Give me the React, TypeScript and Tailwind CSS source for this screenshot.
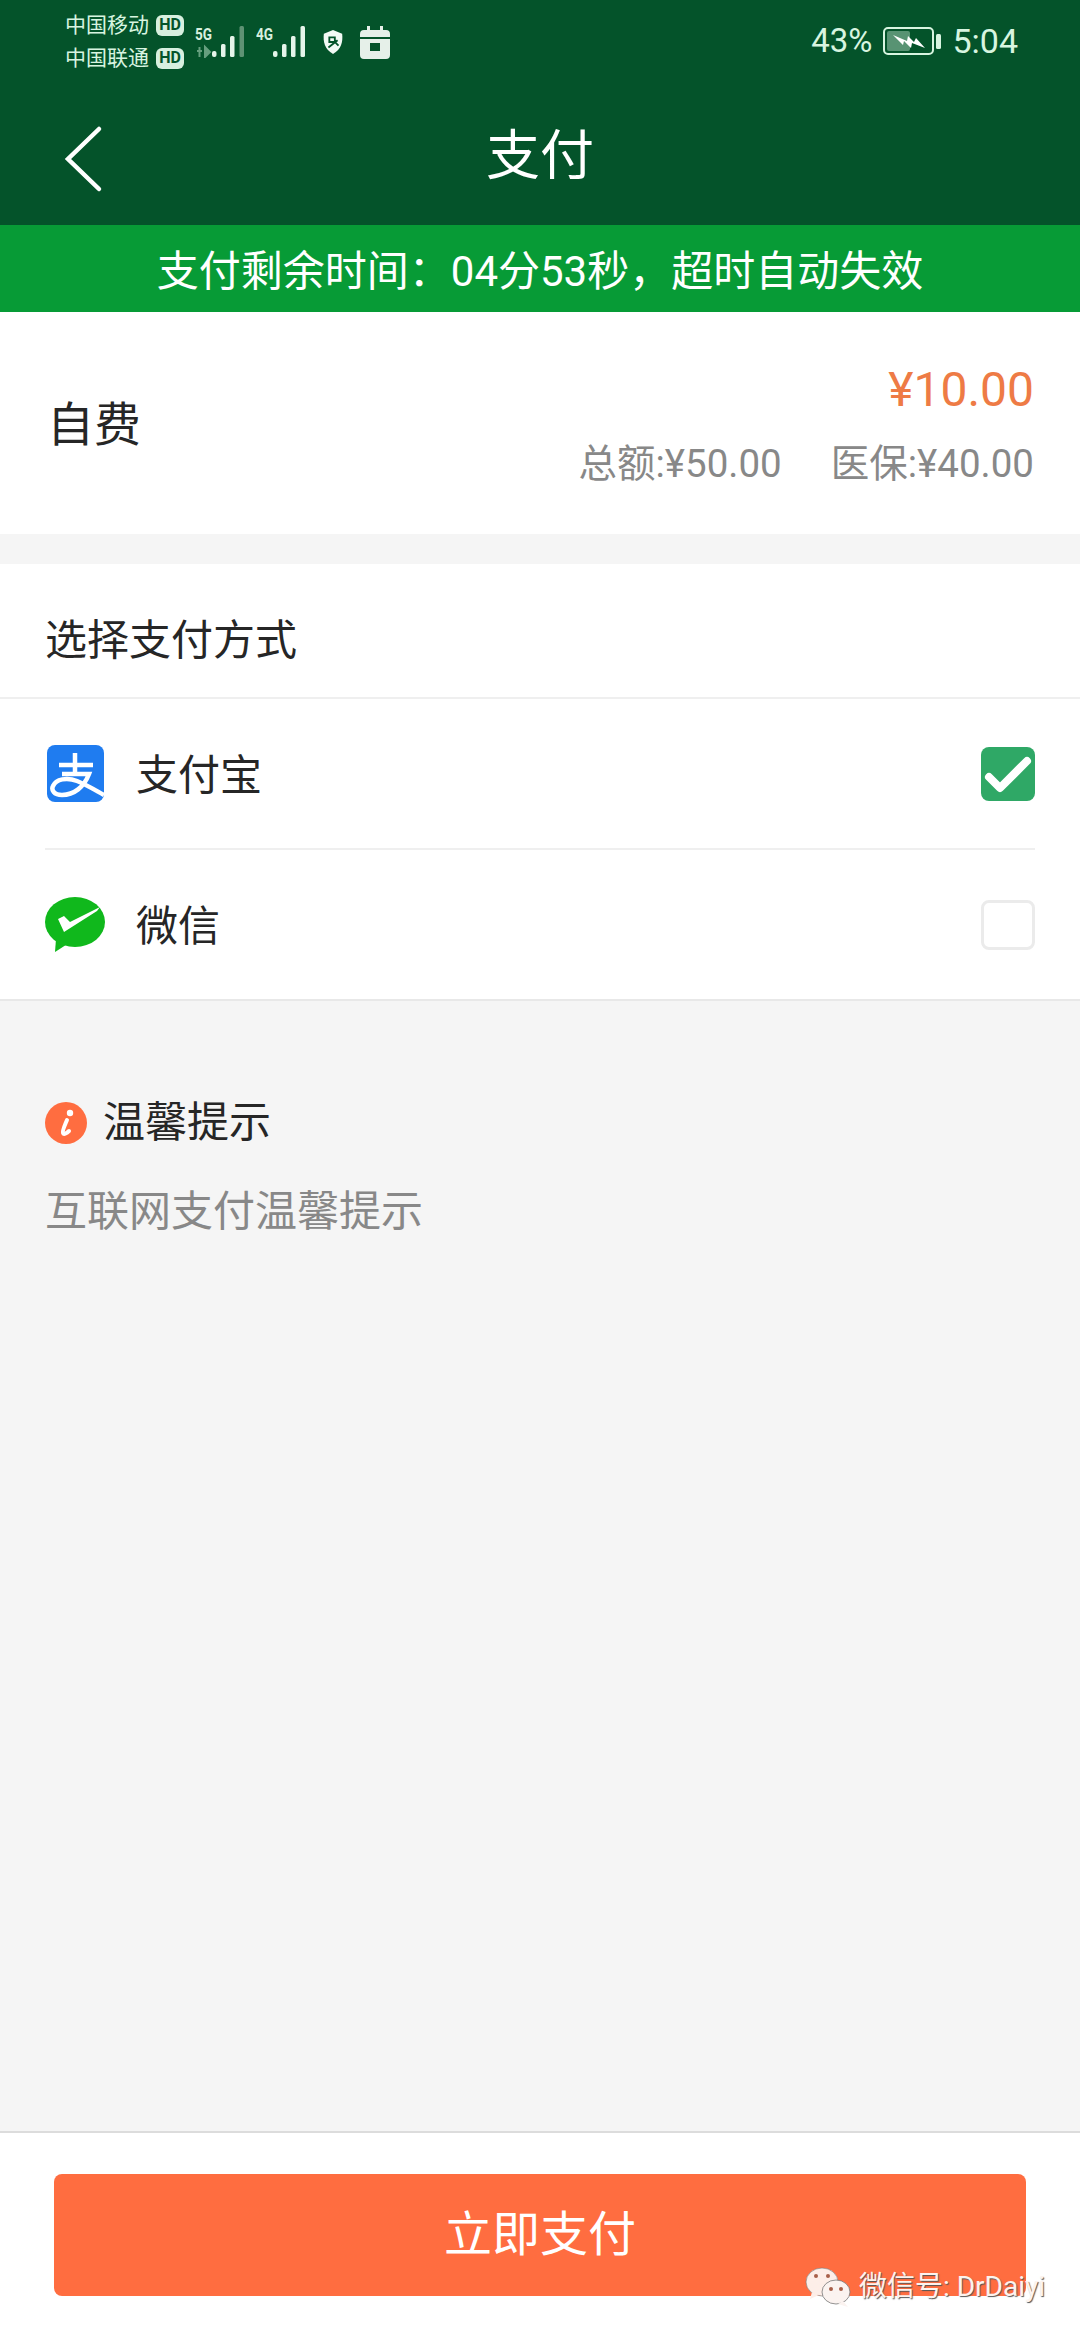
const font = { fontFamily: 'Roboto, "Noto Sans CJK SC", sans-serif' };

function HdBadge() {
  return (
    <span className="flex h-[21px] w-[28px] items-center justify-center rounded-[6px] bg-[#d8f0df] text-[16px] font-bold leading-none text-[#04532a]">
      HD
    </span>
  );
}

function Signal({ label, dim }: { label: string; dim?: boolean }) {
  return (
    <svg width="50" height="32" viewBox="0 0 50 32">
      <text x="0" y="14" fontSize="16" fontWeight="700" fill="#d8f0df" textLength="17" lengthAdjust="spacingAndGlyphs">
        {label}
      </text>
      {dim && <path d="M2 25h5M4.500 21v10M10 21v10l5-5z" stroke="#7fb394" strokeWidth="2" fill="#7fb394" opacity="0.8" />}
      <rect x="17" y="25" width="4.500" height="6" rx="2" fill="#e6f5ea" />
      <rect x="26" y="18" width="4.500" height="13" rx="1.500" fill="#e6f5ea" />
      <rect x="35" y="10" width="4.500" height="21" rx="1.500" fill="#e6f5ea" />
      <rect x="44.500" y="0" width="4.500" height="31" rx="1.500" fill={dim ? '#5f9274' : '#e6f5ea'} />
    </svg>
  );
}

function StatusBar() {
  return (
    <div className="flex h-[70px] items-start justify-between pl-[65px] pr-[62px] pt-[14px] text-[#d8f5e0]">
      <div className="flex items-start">
        <div className="flex flex-col gap-[11px]">
          <div className="flex items-center gap-[7px] text-[21px] leading-[22px]">
            <span>中国移动</span>
            <HdBadge />
          </div>
          <div className="flex items-center gap-[7px] text-[21px] leading-[22px]">
            <span>中国联通</span>
            <HdBadge />
          </div>
        </div>
        <div className="ml-[11px] mt-[12px] flex items-start gap-[11px]">
          <Signal label="5G" dim />
          <Signal label="4G" />
        </div>
        <svg className="ml-[16px] mt-[15px]" width="22" height="26" viewBox="0 0 24 28">
          <path d="M12 1l10 4c1 9-1 17-10 22C3 22 1 14 2 5z" fill="#f3faf5" />
          <path d="M8 9h6v5H8zM7 20l10-8M15 15l3 3" stroke="#04532a" strokeWidth="2" fill="none" />
        </svg>
        <svg className="ml-[16px] mt-[12px]" width="30" height="33" viewBox="0 0 30 33">
          <path d="M7 0h3v4h10V0h3v4h3a4 4 0 0 1 4 4v3H0V8a4 4 0 0 1 4-4h3z" fill="#e6f0e9" />
          <path fillRule="evenodd" d="M0 13h30v16a4 4 0 0 1-4 4H4a4 4 0 0 1-4-4zM10 17v8h10v-8z" fill="#e6f0e9" />
        </svg>
      </div>
      <div className="mt-[10px] flex items-center text-[34px] leading-[34px]">
        <span className="text-[33px]">43%</span>
        <svg className="ml-[11px]" width="58" height="29" viewBox="0 0 58 29">
          <rect x="1" y="1" width="49" height="26" rx="4" fill="none" stroke="#d8f5e0" strokeWidth="2" />
          <rect x="4" y="4" width="23" height="20" rx="2" fill="#d8f5e0" opacity="0.4" />
          <path d="M10 8l14 6 1-5 6 6 2-4 9 10-13-5-1 5-7-7-1 4z" fill="#fff" />
          <rect x="53" y="7" width="5" height="15" rx="1.500" fill="#d8f5e0" />
        </svg>
        <span className="ml-[11px]">5:04</span>
      </div>
    </div>
  );
}

function AlipayIcon() {
  return (
    <svg className="ml-[2px]" width="57" height="57" viewBox="0 0 57 57">
      <rect width="57" height="57" rx="8" fill="#1f7cf0" />
      <path
        d="M12 20H46M28 8V27M15 29H42C37 42 27 50 15 50C7 50 4 45 6 41C9 34 20 32 30 36C40 40 48 45 57 50"
        fill="none"
        stroke="#fff"
        strokeWidth="4.500"
      />
    </svg>
  );
}

function WechatIcon() {
  return (
    <svg width="60" height="56" viewBox="0 0 60 56">
      <ellipse cx="30" cy="25" rx="30" ry="25" fill="#10b81c" />
      <path d="M11 42l-1 13 14-9z" fill="#10b81c" />
      <path d="M13 22l6-3 6 6L55 10l-3 4L19 35z" fill="#fff" />
    </svg>
  );
}

function PayRow({ name, icon, checked }: { name: string; icon: React.ReactNode; checked?: boolean }) {
  return (
    <div className="flex h-full items-center">
      <div className="flex w-[91px] items-center">{icon}</div>
      <span className="flex-1 pt-[4px] text-[42px] text-[#262626]">{name}</span>
      {checked ? (
        <svg width="54" height="54" viewBox="0 0 54 54">
          <rect width="54" height="54" rx="8" fill="#2fa866" />
          <path d="M8 30l11 11L46 14" fill="none" stroke="#fff" strokeWidth="8" strokeLinecap="round" strokeLinejoin="round" />
        </svg>
      ) : (
        <div className="h-[50px] w-[54px] rounded-[8px] border-[3px] border-[#ebebeb] bg-white" />
      )}
    </div>
  );
}

export default function App() {
  return (
    <div className="relative flex h-[2340px] w-[1080px] flex-col overflow-hidden bg-[#f5f5f5]" style={font}>
      <header className="h-[225px] bg-[#04532a]">
        <StatusBar />
        <div className="relative flex h-[155px] items-center justify-center pt-[18px]">
          <svg className="absolute left-[62px] top-[55px]" width="42" height="70" viewBox="0 0 42 70">
            <path d="M37 4L6 34l31 30" fill="none" stroke="#fff" strokeWidth="4.500" strokeLinecap="round" />
          </svg>
          <h1 className="text-[54px] font-normal leading-none text-white">支付</h1>
        </div>
      </header>

      <div className="flex h-[87px] items-center justify-center bg-[#079b36] pt-[6px] text-[42px] text-white">
        支付剩余时间：04分53秒，超时自动失效
      </div>

      <section className="flex h-[222px] items-center justify-between bg-white pl-[47px] pr-[46px]">
        <span className="pt-[4px] text-[47px] text-[#262626]">自费</span>
        <div className="flex flex-col items-end pt-[2px]">
          <span className="text-[48px] leading-[60px] text-[#ee7b45]">¥10.00</span>
          <div className="mt-[20px] flex gap-[49px] text-[38.500px] leading-[48px] text-[#888888]">
            <span>总额:¥50.00</span>
            <span>医保:¥40.00</span>
          </div>
        </div>
      </section>

      <section className="mt-[30px] border-b-2 border-[#e8e8e8] bg-white">
        <div className="flex h-[135px] items-center border-b-2 border-[#efefef] pl-[45px] pt-[20px] text-[42px] text-[#262626]">
          选择支付方式
        </div>
        <div className="pl-[45px] pr-[45px]">
          <div className="h-[151px] border-b-2 border-[#efefef]">
            <PayRow name="支付宝" icon={<AlipayIcon />} checked />
          </div>
          <div className="h-[149px]">
            <PayRow name="微信" icon={<WechatIcon />} />
          </div>
        </div>
      </section>

      <section className="flex-1 pl-[45px] pt-[92px]">
        <div className="flex items-center gap-[16px] text-[42px] leading-[60px] text-[#262626]">
          <svg width="42" height="42" viewBox="0 0 42 42">
            <circle cx="21" cy="21" r="21" fill="#ff6d40" />
            <circle cx="25" cy="11" r="3.200" fill="#fff" />
            <path d="M22 18c-2 5-5 11-4 13 1 2 4 0 6-2" fill="none" stroke="#fff" strokeWidth="4" strokeLinecap="round" />
          </svg>
          <span>温馨提示</span>
        </div>
        <p className="mt-[29px] text-[42px] leading-[60px] text-[#888888]">互联网支付温馨提示</p>
      </section>

      <footer className="h-[209px] border-t-2 border-[#dcdcdc] bg-white px-[54px] pt-[41px]">
        <button className="flex h-[122px] w-full items-center justify-center rounded-[8px] bg-[#ff6d40] text-[48px] text-white">
          立即支付
        </button>
      </footer>

      {/* watermark sits on top of the button corner */}
      <div className="absolute left-[805px] top-[2266px] flex items-center gap-[8px] text-[28px] leading-[40px] text-[#fdf3ee] [text-shadow:1px_1px_1px_#555]">
        <svg width="46" height="42" viewBox="0 0 46 42">
          <ellipse cx="17" cy="16" rx="16" ry="14" fill="#fdeee8" stroke="#777" strokeWidth="0.600" />
          <path d="M7 26l-2 7 9-4z" fill="#fdeee8" />
          <ellipse cx="31" cy="26" rx="14" ry="12" fill="#fbf3f0" stroke="#777" strokeWidth="0.800" />
          <path d="M38 35l5 6-10-3z" fill="#fbf3f0" />
          <circle cx="11" cy="10" r="2" fill="#a8604a" />
          <circle cx="23" cy="10" r="2" fill="#a8604a" />
          <circle cx="26" cy="23" r="2" fill="#a8604a" />
          <circle cx="36" cy="23" r="2" fill="#a8604a" />
        </svg>
        <span className="whitespace-nowrap">微信号: DrDaiyi</span>
      </div>
    </div>
  );
}
